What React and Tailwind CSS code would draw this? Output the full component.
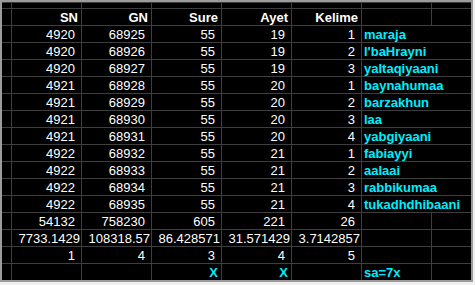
const rows = [
  [4920, 68925, 55, 19, 1, 'maraja'],
  [4920, 68926, 55, 19, 2, "l'baHrayni"],
  [4920, 68927, 55, 19, 3, 'yaltaqiyaani'],
  [4921, 68928, 55, 20, 1, 'baynahumaa'],
  [4921, 68929, 55, 20, 2, 'barzakhun'],
  [4921, 68930, 55, 20, 3, 'laa'],
  [4921, 68931, 55, 20, 4, 'yabgiyaani'],
  [4922, 68932, 55, 21, 1, 'fabiayyi'],
  [4922, 68933, 55, 21, 2, 'aalaai'],
  [4922, 68934, 55, 21, 3, 'rabbikumaa'],
  [4922, 68935, 55, 21, 4, 'tukadhdhibaani'],
]

const headers = ['SN', 'GN', 'Sure', 'Ayet', 'Kelime']
const sums = ['54132', '758230', '605', '221', '26']
const avgs = ['7733.1429', '108318.57', '86.428571', '31.571429', '3.7142857']
const ranks = ['1', '4', '3', '4', '5']

function Blank({ className = '' }) {
  return <div className={`bg-black ${className}`} />
}

function Num({ children, tight }) {
  return (
    <div className={`bg-black text-right text-white text-[13px] leading-[17px] whitespace-nowrap ${tight ? 'pr-[1px]' : 'pr-[6px]'}`}>
      {children}
    </div>
  )
}

function Word({ children, span }) {
  return (
    <div className={`bg-black pl-[2px] text-left font-bold text-[13px] leading-[17px] text-[#00eeff] whitespace-nowrap ${span ? 'col-span-2' : ''}`}>
      {children}
    </div>
  )
}

export default function App() {
  return (
    <div className="w-[475px] h-[285px] bg-[#f0f0f0] font-['Liberation_Sans',Arial,sans-serif]">
      <div className="w-[473px] h-[282px] border-2 border-[#9c9c9c] bg-[#3e3e3e] pt-px">
        <div className="grid grid-cols-[9px_69px_69px_69px_69px_69px_69px_39px] grid-rows-[5px_repeat(16,16px)] gap-px">
          {/* row cut off above the header */}
          {Array.from({ length: 8 }).map((_, i) => <Blank key={'top' + i} />)}

          {/* header */}
          <Blank />
          {headers.map(h => (
            <div key={h} className="bg-black text-right pr-[3px] text-white font-bold text-[13px] leading-[17px]">{h}</div>
          ))}
          <Blank />
          <Blank />

          {rows.map((r, i) => (
            <div key={i} className="contents">
              <Blank />
              {r.slice(0, 5).map((n, j) => <Num key={j}>{n}</Num>)}
              <Word span>{r[5]}</Word>
            </div>
          ))}

          <Blank />
          {sums.map((n, j) => <Num key={'s' + j}>{n}</Num>)}
          <Blank />
          <Blank />

          <Blank />
          {avgs.map((n, j) => <Num key={'a' + j} tight>{n}</Num>)}
          <Blank />
          <Blank />

          <Blank />
          {ranks.map((n, j) => <Num key={'r' + j}>{n}</Num>)}
          <Blank />
          <Blank />

          <Blank />
          <Blank />
          <Blank />
          <div className="bg-black text-right pr-[3px] font-bold text-[13px] leading-[17px] text-[#00eeff]">X</div>
          <div className="bg-black text-right pr-[3px] font-bold text-[13px] leading-[17px] text-[#00eeff]">X</div>
          <Blank />
          <Word>sa=7x</Word>
          <Blank />
        </div>
      </div>
    </div>
  )
}
